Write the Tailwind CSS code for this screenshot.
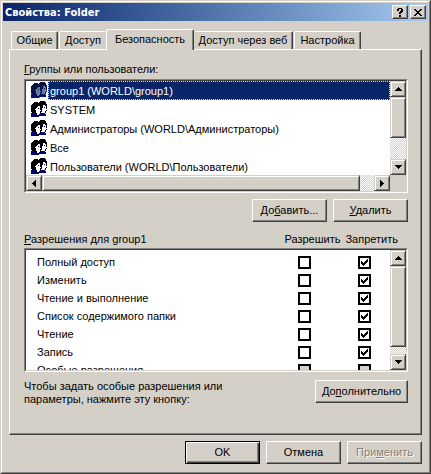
<!DOCTYPE html>
<html lang="ru">

<head>
  <meta charset="UTF-8">
  <meta name="viewport" content="width=device-width, initial-scale=1.0">
  <title>Свойства: Folder</title>
  <script src="https://cdn.jsdelivr.net/npm/@tailwindcss/browser@4"></script>
</head>

<body class="bg-[#d4d0c8] text-black font-['Liberation_Sans',Arial,sans-serif] text-[11px] leading-[13px]">

  <!-- Shared icons -->
  <svg class="hidden">
    <symbol id="users" viewBox="0 0 16 16" shape-rendering="crispEdges">
      <path fill="#000" d="M3 1h4v1h1V1h1V0h5v1h1v2h1v7h-1v2h-4v1H9v2H5v-2H1v-2H0V4h1V3h1V2h1z" />
      <path fill="#fff" d="M7 5h2v4h1v1H9v3H8v1H6v-2H5V9H4V8h1V7h1V6h1zM12 4h2v1h1v3h1v1h-1v1h-1v2h-4v-1h1V7h1z" />
      <path fill="#00007b" d="M0 12h4v1h1v1h1v1h2v1H0zM10 12h4v1h1v2H9v-2h1z" />
      <path fill="#00f" d="M7 7h1v1H7zM13 6h1v1h-1z" />
    </symbol>
    <symbol id="up" viewBox="0 0 7 4" shape-rendering="crispEdges">
      <path d="M3 0h1v1h1v1h1v1h1v1H0V3h1V2h1V1h1z" />
    </symbol>
    <symbol id="down" viewBox="0 0 7 4" shape-rendering="crispEdges">
      <path d="M0 0h7v1H6v1H5v1H4v1H3V3H2V2H1V1H0z" />
    </symbol>
    <symbol id="left" viewBox="0 0 4 7" shape-rendering="crispEdges">
      <path d="M3 0h1v7H3V6H2V5H1V4H0V3h1V2h1V1h1z" />
    </symbol>
    <symbol id="right" viewBox="0 0 4 7" shape-rendering="crispEdges">
      <path d="M0 0h1v1h1v1h1v1h1v1H3v1H2v1H1v1H0z" />
    </symbol>
    <symbol id="check" viewBox="0 0 7 7" shape-rendering="crispEdges">
      <path d="M0 2h1v1h1v1h1V3h1V2h1V1h1V0h1v3H6v1H5v1H4v1H3v1H2V6H1V5H0z" />
    </symbol>
  </svg>

  <main class="border border-t-[#d4d0c8] border-l-[#d4d0c8] border-r-[#404040] border-b-[#404040]">
    <div class="border border-t-white border-l-white border-r-[#808080] border-b-[#808080] p-px">

      <!-- Title bar -->
      <header class="flex items-center h-[18px] pl-0.5 pr-0.5 bg-linear-to-r from-[#0a246a] to-[#a6caf0]">
        <h1 class="grow font-['DejaVu_Sans_Condensed','DejaVu_Sans',sans-serif] font-bold text-[11px] text-white">Свойства: Folder</h1>
        <div class="flex gap-0.5">
          <button type="button" aria-label="Справка" class="flex items-center justify-center w-4 h-3.5 bg-[#d4d0c8] border border-t-white border-l-white border-r-[#404040] border-b-[#404040] shadow-[inset_-1px_-1px_#808080]">
            <svg class="w-1.5 h-[9px]" viewBox="0 0 6 9" shape-rendering="crispEdges"><path d="M1 0h4v1h1v3H5v1H4v1H2V4h1V3h1V1H2v2H0V1h1zM2 7h2v2H2z" /></svg>
          </button>
          <button type="button" aria-label="Закрыть" class="flex items-center justify-center w-4 h-3.5 bg-[#d4d0c8] border border-t-white border-l-white border-r-[#404040] border-b-[#404040] shadow-[inset_-1px_-1px_#808080]">
            <svg class="w-2 h-[7px]" viewBox="0 0 8 7" shape-rendering="crispEdges"><path d="M0 0h2v1h1v1h2V1h1V0h2v1H7v1H6v1H5v1h1v1h1v1h1v1H6V6H5V5H3v1H2v1H0V6h1V5h1V4h1V3H2V2H1V1H0z" /></svg>
          </button>
        </div>
      </header>

      <div class="px-1.5 pt-2 pb-[7px]">
        <!-- Tabs -->
        <div role="tablist" class="flex items-end pl-0.5">
          <button type="button" role="tab" class="w-[47px] h-[18px] mr-px rounded-t-xs border-t border-l border-white border-r border-r-[#404040] shadow-[inset_-1px_0_#808080]">Общие</button>
          <button type="button" role="tab" class="w-[47px] h-[18px] rounded-t-xs border-t border-l border-white">Доступ</button>
          <button type="button" role="tab" aria-selected="true" class="relative z-10 w-[88px] h-[21px] -mb-px pb-0.5 bg-[#d4d0c8] rounded-t-xs border-t border-l border-white border-r border-r-[#404040] shadow-[inset_-1px_0_#808080]">Безопасность</button>
          <button type="button" role="tab" class="w-[99px] h-[18px] mr-px rounded-t-xs border-t border-white border-r border-r-[#404040] shadow-[inset_-1px_0_#808080]">Доступ через веб</button>
          <button type="button" role="tab" class="w-[67px] h-[18px] rounded-t-xs border-t border-l border-white border-r border-r-[#404040] shadow-[inset_-1px_0_#808080]">Настройка</button>
        </div>

        <section role="tabpanel" class="pl-3.5 pr-[13px] pt-[13px] pb-7 border border-t-white border-l-white border-r-[#404040] border-b-[#404040] shadow-[inset_-1px_-1px_#808080]">
          <h2 id="groups-label" class="pb-[3px]"><u>Г</u>руппы или пользователи:</h2>

          <!-- Groups and users -->
          <div class="border border-t-[#808080] border-l-[#808080] border-r-white border-b-white">
            <div class="flex border border-t-[#404040] border-l-[#404040] border-r-[#d4d0c8] border-b-[#d4d0c8]">
              <div class="grow min-w-0">
                <ul id="groups" role="listbox" aria-labelledby="groups-label" class="h-[94px] overflow-hidden bg-white"></ul>
                <div class="flex h-4 bg-[repeating-conic-gradient(#fff_0_25%,#d4d0c8_0_50%)] bg-size-[2px_2px]">
                  <button type="button" aria-label="Влево" class="flex items-center justify-center w-4 h-4 bg-[#d4d0c8] border border-t-[#d4d0c8] border-l-[#d4d0c8] border-r-[#404040] border-b-[#404040] shadow-[inset_1px_1px_#fff,inset_-1px_-1px_#808080]"><svg class="w-1 h-[7px]"><use href="#left" /></svg></button>
                  <div class="grow bg-[#d4d0c8] border border-t-[#d4d0c8] border-l-[#d4d0c8] border-r-[#404040] border-b-[#404040] shadow-[inset_1px_1px_#fff,inset_-1px_-1px_#808080]"></div>
                  <button type="button" aria-label="Вправо" class="flex items-center justify-center w-4 h-4 ml-3.5 bg-[#d4d0c8] border border-t-[#d4d0c8] border-l-[#d4d0c8] border-r-[#404040] border-b-[#404040] shadow-[inset_1px_1px_#fff,inset_-1px_-1px_#808080]"><svg class="w-1 h-[7px]"><use href="#right" /></svg></button>
                </div>
              </div>
              <div class="flex flex-col w-4 h-[94px] bg-[repeating-conic-gradient(#fff_0_25%,#d4d0c8_0_50%)] bg-size-[2px_2px]">
                <button type="button" aria-label="Вверх" class="flex items-center justify-center w-4 h-4 bg-[#d4d0c8] border border-t-[#d4d0c8] border-l-[#d4d0c8] border-r-[#404040] border-b-[#404040] shadow-[inset_1px_1px_#fff,inset_-1px_-1px_#808080]"><svg class="w-[7px] h-1"><use href="#up" /></svg></button>
                <div class="h-[41px] bg-[#d4d0c8] border border-t-[#d4d0c8] border-l-[#d4d0c8] border-r-[#404040] border-b-[#404040] shadow-[inset_1px_1px_#fff,inset_-1px_-1px_#808080]"></div>
                <button type="button" aria-label="Вниз" class="flex items-center justify-center w-4 h-4 mt-auto bg-[#d4d0c8] border border-t-[#d4d0c8] border-l-[#d4d0c8] border-r-[#404040] border-b-[#404040] shadow-[inset_1px_1px_#fff,inset_-1px_-1px_#808080]"><svg class="w-[7px] h-1"><use href="#down" /></svg></button>
              </div>
            </div>
          </div>

          <div class="flex justify-end gap-1.5 pt-1.5">
            <button type="button" class="w-[75px] h-[23px] border border-t-white border-l-white border-r-[#404040] border-b-[#404040] shadow-[inset_-1px_-1px_#808080]">До<u>б</u>авить...</button>
            <button type="button" class="w-[75px] h-[23px] border border-t-white border-l-white border-r-[#404040] border-b-[#404040] shadow-[inset_-1px_-1px_#808080]"><u>У</u>далить</button>
          </div>

          <!-- Permissions -->
          <div class="flex gap-[5px] pt-[11px] pb-0.5 pr-2.5">
            <h2 id="perms-label" class="grow"><u>Р</u>азрешения для group1</h2>
            <span>Разрешить</span>
            <span>Запретить</span>
          </div>
          <div class="border border-t-[#808080] border-l-[#808080] border-r-white border-b-white">
            <div class="flex border border-t-[#404040] border-l-[#404040] border-r-[#d4d0c8] border-b-[#d4d0c8]">
              <div class="grow h-[120px] pt-[3px] overflow-hidden bg-white">
                <table aria-labelledby="perms-label" class="w-full table-fixed">
                  <tbody id="permissions"></tbody>
                </table>
              </div>
              <div class="flex flex-col w-4 bg-[repeating-conic-gradient(#fff_0_25%,#d4d0c8_0_50%)] bg-size-[2px_2px]">
                <button type="button" aria-label="Вверх" class="flex items-center justify-center w-4 h-4 bg-[#d4d0c8] border border-t-[#d4d0c8] border-l-[#d4d0c8] border-r-[#404040] border-b-[#404040] shadow-[inset_1px_1px_#fff,inset_-1px_-1px_#808080]"><svg class="w-[7px] h-1"><use href="#up" /></svg></button>
                <div class="h-[81px] bg-[#d4d0c8] border border-t-[#d4d0c8] border-l-[#d4d0c8] border-r-[#404040] border-b-[#404040] shadow-[inset_1px_1px_#fff,inset_-1px_-1px_#808080]"></div>
                <button type="button" aria-label="Вниз" class="flex items-center justify-center w-4 h-4 mt-auto bg-[#d4d0c8] border border-t-[#d4d0c8] border-l-[#d4d0c8] border-r-[#404040] border-b-[#404040] shadow-[inset_1px_1px_#fff,inset_-1px_-1px_#808080]"><svg class="w-[7px] h-1"><use href="#down" /></svg></button>
              </div>
            </div>
          </div>

          <div class="flex items-start justify-between pt-2">
            <p>Чтобы задать особые разрешения или<br>параметры, нажмите эту кнопку:</p>
            <button type="button" class="w-[93px] h-[23px] shrink-0 border border-t-white border-l-white border-r-[#404040] border-b-[#404040] shadow-[inset_-1px_-1px_#808080]">До<u>п</u>олнительно</button>
          </div>
        </section>

        <!-- Dialog buttons -->
        <div class="flex justify-end gap-1.5 pt-1.5">
          <button type="submit" class="w-[75px] h-[23px] border border-black shadow-[inset_1px_1px_#fff,inset_-1px_-1px_#404040,inset_-2px_-2px_#808080]">OK</button>
          <button type="button" class="w-[75px] h-[23px] border border-t-white border-l-white border-r-[#404040] border-b-[#404040] shadow-[inset_-1px_-1px_#808080]">Отмена</button>
          <button type="button" disabled class="w-[75px] h-[23px] text-[#808080] text-shadow-[1px_1px_#fff] border border-t-white border-l-white border-r-[#404040] border-b-[#404040] shadow-[inset_-1px_-1px_#808080]">При<u>м</u>енить</button>
        </div>
      </div>
    </div>
  </main>

  <script>
    const groups = [
      'group1 (WORLD\\group1)',
      'SYSTEM',
      'Администраторы (WORLD\\Администраторы)',
      'Все',
      'Пользователи (WORLD\\Пользователи)'
    ];

    const permissions = [
      { name: 'Полный доступ', deny: true },
      { name: 'Изменить', deny: true },
      { name: 'Чтение и выполнение', deny: true },
      { name: 'Список содержимого папки', deny: true },
      { name: 'Чтение', deny: true },
      { name: 'Запись', deny: true },
      { name: 'Особые разрешения', deny: false, disabled: true }
    ];

    // The selected row's icon gets a translucent tint of the highlight colour
    document.getElementById('groups').innerHTML = groups.map((name, i) => `
      <li role="option" aria-selected="${i === 0}" class="group flex h-[19px] pl-[5px]">
        <span class="relative w-[17px] shrink-0 pt-px">
          <svg class="w-4 h-4"><use href="#users" /></svg>
          <svg class="absolute top-px left-0 w-4 h-4 hidden opacity-60 group-aria-selected:block" viewBox="0 0 16 16" shape-rendering="crispEdges"><path fill="#0a246a" d="M3 1h4v1h1V1h1V0h5v1h1v2h1v7h-1v5H9v1H0V4h1V3h1V2h1z" /></svg>
        </span>
        <span class="grow pl-px pt-[3px] border border-transparent whitespace-nowrap group-aria-selected:bg-[#0a246a] group-aria-selected:text-white group-aria-selected:border-dotted group-aria-selected:border-[#f5db95]">${name}</span>
      </li>`).join('');

    const checkbox = (label, checked, disabled) => `
      <span class="grid w-[13px] h-[13px] mx-auto place-items-center">
        <input type="checkbox" aria-label="${label}" ${checked ? 'checked' : ''} ${disabled ? 'disabled' : ''} class="peer col-start-1 row-start-1 appearance-none w-[13px] h-[13px] bg-white border-2 border-black disabled:bg-[#d4d0c8]">
        <svg class="col-start-1 row-start-1 w-[7px] h-[7px] invisible pointer-events-none peer-checked:visible"><use href="#check" /></svg>
      </span>`;

    document.getElementById('permissions').innerHTML = permissions.map(({ name, deny, disabled }) => `
      <tr class="h-[18px]">
        <th scope="row" class="pl-[11px] text-left font-normal whitespace-nowrap">${name}</th>
        <td class="w-[69px]">${checkbox(name + ': разрешить', false, disabled)}</td>
        <td class="w-[51px]">${checkbox(name + ': запретить', deny, disabled)}</td>
      </tr>`).join('');
  </script>
</body>

</html>
